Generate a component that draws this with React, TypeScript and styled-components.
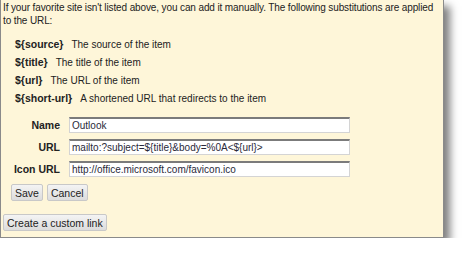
import styled, { createGlobalStyle } from "styled-components";

const GlobalStyle = createGlobalStyle`
    body {
        margin: 0;
        background: #fff;
        font-family: "Liberation Sans", Arial, sans-serif;
    }
`

const Panel = styled.div`
    box-sizing: border-box;
    width: 444px;
    height: 238px;
    background: #fef6d9;
    border: 1px solid #8a8a8a;
    border-top: none;
    box-shadow: 6px 6px 8px rgba(0, 0, 0, 0.5);
    padding: 0 0 0 2px;
    color: #222;
    font-size: 10px;
    line-height: 13px;
`

const Intro = styled.p`
    margin: 0;
    padding-top: 1px;
    letter-spacing: -0.12px;
`

const Subs = styled.div`
    display: flex;
    flex-direction: column;
    gap: 5px;
    margin: 11px 0 0 12px;
`

const SubRow = styled.div`
    display: flex;
    gap: 8px;
`

const Term = styled.span`
    font-weight: bold;
    font-size: 10.5px;
`

const Form = styled.div`
    display: grid;
    grid-template-columns: 57px 281px;
    grid-auto-rows: 16px;
    column-gap: 9px;
    row-gap: 6px;
    margin-top: 12px;
    align-items: center;
`

const Label = styled.label`
    font-weight: bold;
    font-size: 10.5px;
    text-align: right;
`

const Input = styled.input`
    box-sizing: border-box;
    height: 16px;
    width: 100%;
    margin: 0;
    padding: 0 2px;
    border: 1px solid #d4d4d4;
    border-top: 2px solid #7b7b7b;
    background: #fff;
    font-family: "Liberation Sans", Arial, sans-serif;
    font-size: 10px;
    color: #2a2a3a;
    outline: none;
`

const Buttons = styled.div`
    display: flex;
    gap: 4px;
    margin: 7px 0 0 8px;
`

const Button = styled.button`
    box-sizing: border-box;
    height: 17px;
    padding: 0 3px;
    border: 1px solid #c8c8c8;
    border-radius: 2px;
    background: linear-gradient(#f4f4f4, #dcdcdc);
    font-family: "Liberation Sans", Arial, sans-serif;
    font-size: 10.5px;
    color: #222;
`

const Footer = styled.div`
    margin-top: 13px;
`

const subs = [
    ["${source}", "The source of the item"],
    ["${title}", "The title of the item"],
    ["${url}", "The URL of the item"],
    ["${short-url}", "A shortened URL that redirects to the item"],
]

export default function App() {
    return (
        <>
            <GlobalStyle />
            <Panel>
                <Intro>
                    If your favorite site isn't listed above, you can add it manually. The following substitutions are applied
                    to the URL:
                </Intro>
                <Subs>
                    {subs.map(([term, desc]) => (
                        <SubRow key={term}>
                            <Term>{term}</Term>
                            <span>{desc}</span>
                        </SubRow>
                    ))}
                </Subs>
                <Form>
                    <Label>Name</Label>
                    <Input defaultValue="Outlook" />
                    <Label>URL</Label>
                    <Input defaultValue="mailto:?subject=${title}&body=%0A<${url}>" />
                    <Label>Icon URL</Label>
                    <Input defaultValue="http://office.microsoft.com/favicon.ico" />
                </Form>
                <Buttons>
                    <Button>Save</Button>
                    <Button>Cancel</Button>
                </Buttons>
                <Footer>
                    <Button>Create a custom link</Button>
                </Footer>
            </Panel>
        </>
    )
}
